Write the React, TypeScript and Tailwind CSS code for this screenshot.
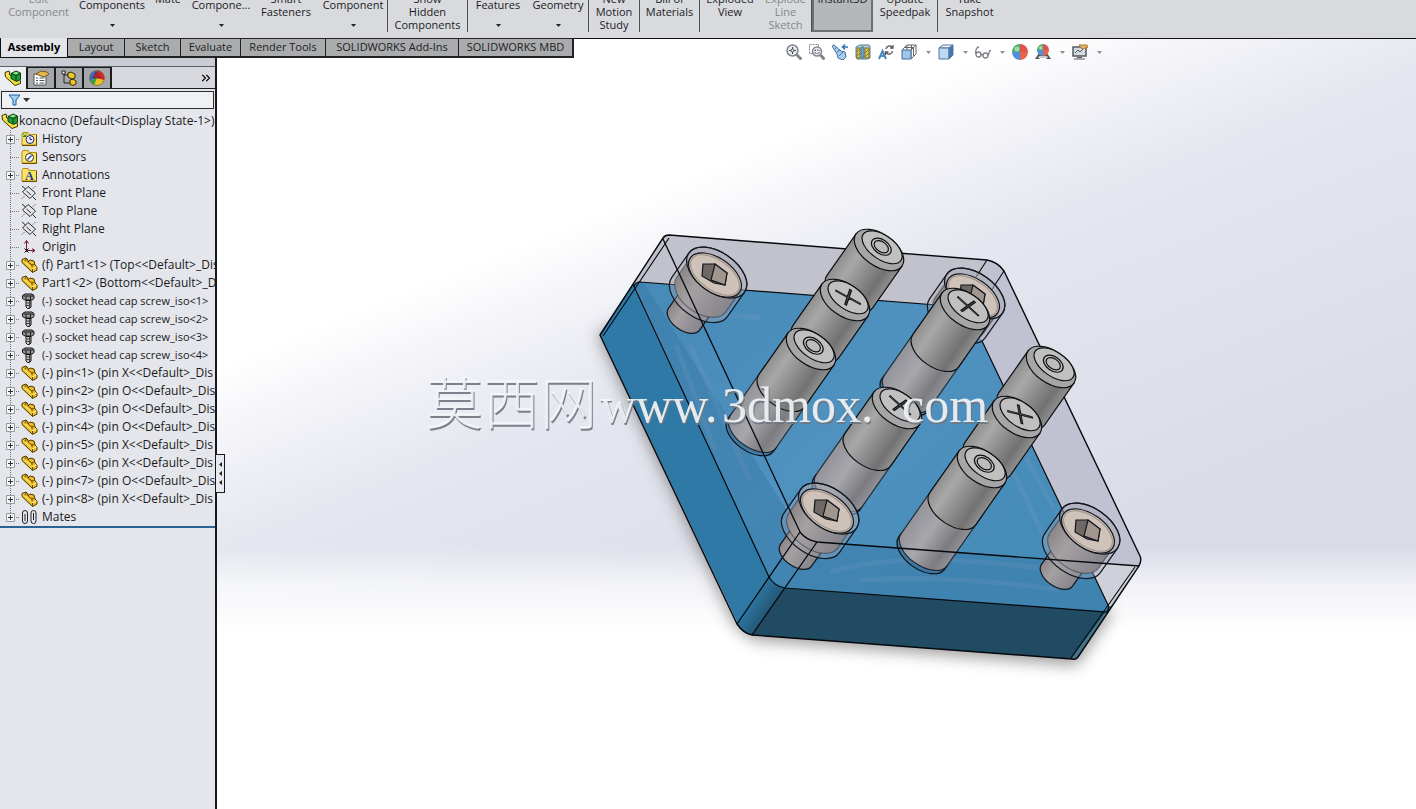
import React from "react";
import { ChevronsRight } from "lucide-react";

type CommandProps = {
  lines: string[];
  width: string;
  menu?: boolean;
  disabled?: boolean;
  pressed?: boolean;
};

const commandGroups: CommandProps[][] = [
  [
    { lines: ["Edit", "Component"], width: "w-[77px]", disabled: true },
    { lines: ["Components"], width: "w-[70px]", menu: true },
    { lines: ["Mate"], width: "w-[42px]" },
    { lines: ["Compone..."], width: "w-[64px]", menu: true },
    { lines: ["Smart", "Fasteners"], width: "w-[66px]" },
    { lines: ["Component"], width: "w-[68px]", menu: true },
  ],
  [{ lines: ["Show", "Hidden", "Components"], width: "w-[79px]" }],
  [
    { lines: ["Features"], width: "w-[60px]", menu: true },
    { lines: ["Geometry"], width: "w-[60px]", menu: true },
  ],
  [{ lines: ["New", "Motion", "Study"], width: "w-[50px]" }],
  [{ lines: ["Bill of", "Materials"], width: "w-[59px]" }],
  [
    { lines: ["Exploded", "View"], width: "w-[60px]" },
    { lines: ["Explode", "Line", "Sketch"], width: "w-[51px]", disabled: true },
  ],
  [
    { lines: ["Instant3D"], width: "w-[61px]", pressed: true },
    { lines: ["Update", "Speedpak"], width: "w-[64px]" },
  ],
  [{ lines: ["Take", "Snapshot"], width: "w-[63px]" }],
];

const documentTabs = [
  { label: "Assembly", width: "w-[68px]" },
  { label: "Layout", width: "w-[57px]" },
  { label: "Sketch", width: "w-[56px]" },
  { label: "Evaluate", width: "w-[60px]" },
  { label: "Render Tools", width: "w-[85px]" },
  { label: "SOLIDWORKS Add-Ins", width: "w-[133px]" },
  { label: "SOLIDWORKS MBD", width: "w-[115px]" },
];

type TreeItem = { icon: keyof typeof treeIcons; label: string; expandable?: boolean };

function Assembly() {
  return (
    <svg className="shrink-0" width="18" height="16" viewBox="0 0 18 16">
      <path d="M1 2.500L5 1l1 2-1 1 6 6 2-1 3.500 1.500v3L11 15.500 1.500 7z" fill="#f2dc3c" stroke="#3c3000" />
      <path d="M2 3l9.500 8.500L16 10" fill="none" stroke="#fff7a8" />
      <path d="M7 3.500L12 1l4.500 2v6.500l-4 2L7 8.500z" fill="#1f9a34" stroke="#0c3f14" />
      <path d="M7 3.500l5 2v5.500M12 5.500l4.500-2" fill="none" stroke="#0c3f14" />
      <path d="M8.500 3.300L12 1.700l3 1.400-3 1.400z" fill="#8ee58a" />
    </svg>
  );
}

function Folder({ children }: { children: React.ReactNode }) {
  return (
    <svg width="16" height="16" viewBox="0 0 16 16">
      <path d="M1 3.500V14h14.500V3.500H8L7 1.500H2z" fill="#fbe564" stroke="#b98a10" />
      <path d="M15.500 4v10.500H1" fill="none" stroke="#6e4a00" />
      {children}
    </svg>
  );
}

function Plane() {
  return (
    <svg width="16" height="16" viewBox="0 0 16 16" fill="none" stroke="#2b2b2b">
      <path d="M7 1.500L14.500 8 9 13.500 1.500 7z" />
      <path d="M1 1l4 3.500M11.500 11.500L15 15M5.500 6l4.500 4" />
      <path d="M1 13.500L3.500 11M12 3.500L14.500 1" strokeDasharray="1 1" />
    </svg>
  );
}

function Part() {
  return (
    <svg width="17" height="16" viewBox="0 0 17 16">
      <path d="M1 2.500L5 1l2 2v2l2-2 4 1 1 4 2 2v3l-4.500 2.500L1 5.500z" fill="#efbe20" stroke="#4d3600" />
      <path d="M2 3.500l9.500 8L15.500 10" fill="none" stroke="#fff2a0" />
      <path d="M7.500 5.500L11 8l2.500-1M11 8v2.500M11.500 12v3M5 1.500v2L3.500 4" fill="none" stroke="#6b4900" />
    </svg>
  );
}

function Bolt() {
  return (
    <svg width="16" height="16" viewBox="0 0 16 16">
      <path d="M1.500 2.500L4 1h7l2 1.500v3L11 7H4L1.500 5.500z" fill="#9b9b9b" stroke="#111" />
      <path d="M5 3.500v3M9.500 3.500v3M2.500 3h10" stroke="#111" />
      <path d="M5 7.500h5V14l-1.500 1.500h-2L5 14z" fill="#c9c9c9" stroke="#111" />
      <path d="M8.500 8v7M5 10h5M5 12.500h5" stroke="#444" />
    </svg>
  );
}

const treeIcons = {
  history: (
    <Folder>
      <circle cx="9" cy="8.500" r="4" fill="#e9ecff" stroke="#23237a" />
      <path d="M9 6v2.500h2" fill="none" stroke="#23237a" />
      <path d="M1.500 2.500l3 3M5 2.500v3H2" fill="none" stroke="#188a18" />
    </Folder>
  ),
  sensors: (
    <Folder>
      <circle cx="8.500" cy="8.500" r="4" fill="#fff" stroke="#333" />
      <path d="M6.500 10.500l4-4" stroke="#1d3f9c" strokeWidth="1.500" />
    </Folder>
  ),
  annotations: (
    <Folder>
      <text x="4" y="13" className="fill-[#173a9a] font-['Liberation_Serif',serif] text-[12px] font-bold">
        A
      </text>
    </Folder>
  ),
  plane: <Plane />,
  origin: (
    <svg width="16" height="16" viewBox="0 0 16 16" fill="none" stroke="#7d1230">
      <path d="M5.500 13V2M3.500 4.500l2-3 2 3M5 11.500h9M11 9.500l3 2-3 2" />
      <path d="M3.500 9.500l4 4M7.500 9.500l-4 4" stroke="#111" />
    </svg>
  ),
  part: <Part />,
  bolt: <Bolt />,
  mates: (
    <svg width="17" height="16" viewBox="0 0 17 16" fill="none" stroke="#222">
      <path d="M1.500 12V4a2.500 2.500 0 015 0v8a2.500 2.500 0 01-5 0M4 5v7" />
      <path d="M10 12V4a2.500 2.500 0 015 0v8a2.500 2.500 0 01-5 0M12.500 4v7" />
    </svg>
  ),
};

const treeItems: TreeItem[] = [
  { icon: "history", label: "History", expandable: true },
  { icon: "sensors", label: "Sensors" },
  { icon: "annotations", label: "Annotations", expandable: true },
  { icon: "plane", label: "Front Plane" },
  { icon: "plane", label: "Top Plane" },
  { icon: "plane", label: "Right Plane" },
  { icon: "origin", label: "Origin" },
  { icon: "part", label: "(f) Part1<1> (Top<<Default>_Dis", expandable: true },
  { icon: "part", label: "Part1<2> (Bottom<<Default>_Di", expandable: true },
  { icon: "bolt", label: "(-) socket head cap screw_iso<1>", expandable: true },
  { icon: "bolt", label: "(-) socket head cap screw_iso<2>", expandable: true },
  { icon: "bolt", label: "(-) socket head cap screw_iso<3>", expandable: true },
  { icon: "bolt", label: "(-) socket head cap screw_iso<4>", expandable: true },
  { icon: "part", label: "(-) pin<1> (pin X<<Default>_Dis", expandable: true },
  { icon: "part", label: "(-) pin<2> (pin O<<Default>_Dis", expandable: true },
  { icon: "part", label: "(-) pin<3> (pin O<<Default>_Dis", expandable: true },
  { icon: "part", label: "(-) pin<4> (pin O<<Default>_Dis", expandable: true },
  { icon: "part", label: "(-) pin<5> (pin X<<Default>_Dis", expandable: true },
  { icon: "part", label: "(-) pin<6> (pin X<<Default>_Dis", expandable: true },
  { icon: "part", label: "(-) pin<7> (pin O<<Default>_Dis", expandable: true },
  { icon: "part", label: "(-) pin<8> (pin X<<Default>_Dis", expandable: true },
  { icon: "mates", label: "Mates", expandable: true },
];

function Command({ lines, width, menu, disabled, pressed }: CommandProps) {
  return (
    <button
      type="button"
      disabled={disabled}
      className={`${width} flex h-full shrink-0 flex-col items-center ${
        pressed ? "border-2 border-t-0 border-[#6d7073] bg-[#b4b8bb]" : ""
      } ${disabled ? "text-[#85888c]" : "text-[#1c1c1e]"}`}
    >
      {/* labels hang off the clipped upper edge of the ribbon */}
      <span className={`flex flex-col whitespace-nowrap ${menu ? "-mt-0.5" : "-mt-2"}`}>
        {lines.map((line) => (
          <span key={line}>{line}</span>
        ))}
      </span>
      {menu && (
        <svg className="mt-[13px]" width="5" height="3" viewBox="0 0 5 3">
          <path d="M0 0h5L2.500 3z" fill="#222" />
        </svg>
      )}
    </button>
  );
}

function Ribbon() {
  return (
    <header className="flex h-[38px] shrink-0 overflow-hidden bg-[#d8dade] text-[11px] leading-[13px]">
      {commandGroups.map((group, i) => (
        <div key={i} className="flex h-8 shrink-0 border-r border-[#4e5054] last:border-r-0">
          {group.map((cmd) => (
            <Command key={cmd.lines.join(" ")} {...cmd} />
          ))}
        </div>
      ))}
    </header>
  );
}

function HudCaret() {
  return (
    <svg width="5" height="3" viewBox="0 0 5 3">
      <path d="M0 0h5L2.500 3z" fill="#8e8e92" />
    </svg>
  );
}

function Wheel() {
  return (
    <>
      <path d="M8 8V0a8 8 0 018 8z" fill="#e0524f" />
      <path d="M8 8h8a8 8 0 01-8 8z" fill="#e4644e" />
      <path d="M8 8v8a8 8 0 01-8-8z" fill="#4f8fdc" />
      <path d="M8 8H0a8 8 0 018-8z" fill="#45b265" />
      <circle cx="5" cy="5" r="2.500" fill="#fff" opacity=".5" />
    </>
  );
}

const hudIcons: { label: string; art: React.ReactNode; menu?: boolean }[] = [
  {
    label: "Zoom to Fit",
    art: (
      <g fill="none" stroke="#80848c">
        <circle cx="6.500" cy="6.500" r="5.500" fill="#e8ecf2" strokeWidth="1.500" />
        <path d="M10.500 10.500l5 5" strokeWidth="3" />
        <path d="M6.500 3v2M6.500 8v2M3 6.500h2M8 6.500h2" stroke="#444" />
        <circle cx="6.500" cy="6.500" r="1.500" stroke="#444" />
      </g>
    ),
  },
  {
    label: "Zoom to Area",
    art: (
      <g fill="none" stroke="#80848c">
        <path d="M.5 .5h9v9h-9z" strokeDasharray="2 1" />
        <circle cx="8" cy="7.500" r="4.500" fill="#e8ecf2" strokeWidth="1.500" />
        <path d="M11.500 11l4 4.500" strokeWidth="3" />
        <path d="M6 6h4v3.500H6z" strokeDasharray="1 1" stroke="#444" />
      </g>
    ),
  },
  {
    label: "Previous View",
    art: (
      <g fill="none" stroke="#3f729e">
        <path d="M0 2l2-1 7 6 4 1 1 5-3 3-5-2-1-4z" fill="#a7cdf0" />
        <path d="M3 5l2-2M5 8l3-2M7 12l4-4" />
        <path d="M16 3h-5.500m2.500-2.500L10.500 3 13 5.500" stroke="#2f76b8" strokeWidth="1.500" />
      </g>
    ),
  },
  {
    label: "Section View",
    art: (
      <g stroke="#4d7890">
        <path d="M1 3l4-2h9l1 2v11l-3 1H2l-1-2z" fill="#b9d4dd" />
        <path d="M2 4h3v10H2zM10 4h4v10h-4z" fill="#e9ca3d" stroke="#85712a" />
        <path d="M6 3h3v11H6z" fill="#68a7cd" />
        <path d="M2 8l3-3M2 12l3-3M10 9l4-4M10 13l4-4" stroke="#857535" />
      </g>
    ),
  },
  {
    label: "Dynamic Annotation Views",
    art: (
      <g fill="none" stroke="#555">
        <path d="M1 15l3.500-8L8 15M2.500 12h4" stroke="#4a86bd" strokeWidth="2" />
        <path d="M8 5a3.500 3.500 0 016-2M15 1v3h-3M14.500 7a3.500 3.500 0 01-6 2M7.500 11V8h3" strokeWidth="1.300" />
      </g>
    ),
  },
  {
    label: "View Orientation",
    menu: true,
    art: (
      <g fill="none" stroke="#62666d">
        <path d="M1 6l5-5h9v9l-5 5M10 15V6l5-5M6 1v5M10.500 1v5M12.500 4v8M3.500 3.500h9" />
        <path d="M1 6h9v9H1z" fill="#9fc7ec" stroke="#3e6b97" />
      </g>
    ),
  },
  {
    label: "Display Style",
    menu: true,
    art: (
      <g stroke="#52779d">
        <path d="M1 4l4-3h10l-4 3z" fill="#eef5fb" />
        <path d="M1 4h10v11H1z" fill="#bddaf2" />
        <path d="M11 4l4-3v10l-4 4z" fill="#4179b4" />
      </g>
    ),
  },
  {
    label: "Hide/Show Items",
    menu: true,
    art: (
      <g fill="none" stroke="#7c8087" strokeWidth="1.300">
        <circle cx="3.500" cy="10.500" r="2.500" />
        <circle cx="10.500" cy="11.500" r="2.500" />
        <path d="M1 10C0 6 2 3 4 3M6 10.500l2 .5M13 11.500c2-3 0-5 3-5" />
      </g>
    ),
  },
  { label: "Edit Appearance", art: <Wheel /> },
  {
    label: "Apply Scene",
    menu: true,
    art: (
      <g>
        <path d="M0 15l4-6h8l4 6h-4l-2-2H6l-2 2z" fill="#555" />
        <path d="M4 12h8l1 2H3z" fill="#c9ccd0" />
        <g transform="translate(2 0) scale(.75)">
          <Wheel />
        </g>
      </g>
    ),
  },
  {
    label: "View Settings",
    menu: true,
    art: (
      <g fill="none" stroke="#55585e">
        <path d="M1 3h13v9H1z" fill="#d5dae0" strokeWidth="1.500" />
        <path d="M3 9l3-3 2 2 4-4M5 13.500h5M2 15h11" />
        <path d="M7 1h8l1 2-6 2z" fill="#e4b567" stroke="#ad7c37" />
      </g>
    ),
  },
];

function HudToolbar() {
  return (
    <div role="toolbar" aria-label="View" className="mr-[314px] mt-[5px] ml-auto flex h-4 shrink-0 items-center gap-[7px]">
      {hudIcons.map(({ label, art, menu }) => (
        <button key={label} type="button" aria-label={label} className="flex items-center gap-[9px]">
          <svg width="16" height="16" viewBox="0 0 16 16">
            {art}
          </svg>
          {menu && <HudCaret />}
        </button>
      ))}
    </div>
  );
}

const panelTabs = [
  { label: "FeatureManager", art: <Assembly /> },
  {
    label: "PropertyManager",
    art: (
      <svg width="18" height="16" viewBox="0 0 18 16">
        <path d="M2 4h12v11H2z" fill="#fff" stroke="#555" />
        <path d="M4 8h2M7.500 8h5M4 10.500h2M7.500 10.500h5M4 13h2M7.500 13h5" stroke="#456" />
        <path d="M4 4l5-3 6 1 2 2-5 3-3-1z" fill="#e3b64e" stroke="#7b5716" />
      </svg>
    ),
  },
  {
    label: "ConfigurationManager",
    art: (
      <svg width="18" height="16" viewBox="0 0 18 16">
        <path d="M4 1v12h6M4 5h5" fill="none" stroke="#222" />
        <path d="M2 1h3v3H2z" fill="#fff" stroke="#222" />
        <path d="M8 3l3-1 4 2v4l-3 1-4-2zM10 10l3-1 3 2v3l-3 1.500-3-1.500z" fill="#edc72f" stroke="#372a00" />
      </svg>
    ),
  },
  {
    label: "DisplayManager",
    art: (
      <svg width="16" height="16" viewBox="0 0 16 16">
        <circle cx="8" cy="8" r="7.500" fill="#efbf24" />
        <path d="M8 8L1 10.500A7.500 7.500 0 018 .5z" fill="#356bd0" />
        <path d="M8 8V.5a7.500 7.500 0 017 9.500z" fill="#d3232b" />
        <path d="M8 8l-7 2.500a7.500 7.500 0 004 4.500z" fill="#35a243" />
        <path d="M7 2l4 6H4z" fill="#c01f28" stroke="#333" strokeWidth=".6" />
        <circle cx="8" cy="8" r="7.500" fill="none" stroke="#664" strokeWidth=".7" />
      </svg>
    ),
  },
];

function TreeRow({ icon, label, expandable, last }: TreeItem & { last: boolean }) {
  return (
    <li className="flex h-[18px] items-center whitespace-nowrap">
      <button type="button" aria-label={`Expand ${label}`} disabled={!expandable} className="h-[18px] w-[21px] shrink-0">
        <svg width="21" height="18" viewBox="0 0 21 18">
          <path d={last ? "M10.500 0v9" : "M10.500 0v18"} stroke="#777" strokeDasharray="1 1" />
          <path d="M10 9.500h10" stroke="#777" strokeDasharray="1 1" />
          {expandable && (
            <>
              <path d="M6.500 5.500h8v8h-8z" fill="#f4f5f7" stroke="#979a9f" />
              <path d="M8 9.500h5M10.500 7v5" stroke="#333" />
            </>
          )}
        </svg>
      </button>
      <span className="w-[17px] shrink-0">{treeIcons[icon]}</span>
      <span className={icon === "bolt" ? "ml-1 text-[11px]" : "ml-1"}>{label}</span>
    </li>
  );
}

function FeaturePanel() {
  return (
    <aside className="relative w-[217px] shrink-0 border-r-2 border-[#16181d] bg-[#e4e6eb]">
      <div className="h-[9px] border-b border-[#5b5d66] bg-[#c9ccd3]" />
      <div role="tablist" className="flex h-[22px] items-stretch bg-[#d7d9de]">
        {panelTabs.map((tab, i) => (
          <button
            key={tab.label}
            type="button"
            role="tab"
            aria-selected={i === 0}
            aria-label={tab.label}
            className={`flex w-7 items-center justify-center border-r-2 border-[#1b1c20] ${
              i === 0 ? "bg-[#eceef1]" : "border-b border-t bg-[#a5a7ab]"
            }`}
          >
            {tab.art}
          </button>
        ))}
        <button type="button" aria-label="More" className="flex flex-1 items-center justify-end border-b border-[#1b1c20] pr-0.5">
          <ChevronsRight size={14} strokeWidth={2} />
        </button>
      </div>
      <div className="mx-px mt-0.5 flex h-[18px] items-center border border-[#2a2b2f] bg-[#f0f1f3] pl-1.5">
        <svg width="24" height="12" viewBox="0 0 24 12">
          <path d="M1 1h11L8 6v5H5V6z" fill="#a4cff5" stroke="#1c5fa6" />
          <path d="M15 4h7l-3.500 4z" fill="#333" />
        </svg>
        <input aria-label="Filter" className="min-w-0 flex-1 bg-transparent outline-none" />
      </div>
      <div className="mt-[3px] overflow-hidden border-b-2 border-[#2c6193] text-[12px] leading-[18px] text-[#1a1a1c]">
        <div className="flex h-[18px] items-center whitespace-pre pl-px">
          <Assembly />
          <span>konacno (Default&lt;Display State-1&gt;)</span>
        </div>
        <ul>
          {treeItems.map((item, i) => (
            <TreeRow key={item.label} {...item} last={i === treeItems.length - 1} />
          ))}
        </ul>
      </div>
      <button
        type="button"
        aria-label="Collapse panel"
        className="absolute top-[396px] -right-[10px] z-10 flex h-[39px] w-[9px] flex-col items-center justify-center gap-1 border border-l-0 border-[#16181d] bg-[#e8eaee]"
      >
        {[0, 1, 2].map((n) => (
          <svg key={n} width="3" height="5" viewBox="0 0 3 5">
            <path d="M3 0v5L0 2.500z" fill="#222" />
          </svg>
        ))}
      </button>
    </aside>
  );
}

const AXIS_ANGLE = 35;

function Pin({ x, y, mark, turn = 0, seated = false }: { x: number; y: number; mark: "x" | "o"; turn?: number; seated?: boolean }) {
  return (
    <g transform={`translate(${x} ${y}) rotate(${AXIS_ANGLE})`} stroke="#0c0e12" strokeWidth="1.200">
      {seated && (
        <>
          <path d="M-28 100v5a28 16 0 0056 0v-5" fill="#3d759d" fillOpacity=".7" />
          <path d="M-28 40v61a28 16 0 0056 0V40z" fill="url(#pinSunk)" strokeOpacity=".75" />
        </>
      )}
      <path d="M-28 0v51a28 16 0 0056 0V0z" fill="url(#pinBody)" />
      <ellipse rx="28" ry="16" fill="#a6a6a6" />
      <ellipse cx="1" cy="-4" rx="23" ry="12" fill="#bfc0bf" />
      {mark === "o" ? (
        <g transform="translate(0 -4)" fill="none">
          <ellipse rx="11" ry="7" />
          <ellipse rx="8" ry="5" fill="#bcbdbc" />
        </g>
      ) : (
        <g transform={`translate(1 -4) scale(1 .6) rotate(${turn})`}>
          <path d="M-14-1L-1-1V-13h2v12L14-1v2H1V13H-1V1L-14 1z" fill="#55585a" />
        </g>
      )}
    </g>
  );
}

function CapScrew({ x, y }: { x: number; y: number }) {
  return (
    <g transform={`translate(${x} ${y})`} stroke="#12161d" strokeWidth="1.200">
      <g transform={`rotate(${AXIS_ANGLE})`}>
        <path d="M-19 28v26a19 11 0 0038 0V28z" fill="url(#screwBody)" />
        <path d="M-34-3v30a34 20 0 0068 0V-3a34 20 0 00-68 0z" fill="#a6a9b8" fillOpacity=".35" />
        <path d="M-30 0v24a30 18 0 0060 0V0z" fill="url(#screwBody)" strokeOpacity=".4" />
        <ellipse cy="-3" rx="34" ry="20" fill="#a9abb4" fillOpacity=".35" />
        <ellipse rx="30" ry="17" fill="#cfc2b8" />
        <ellipse rx="28" ry="15" fill="none" strokeOpacity=".25" />
      </g>
      <path d="M-12-11L0-11 12-2 10 10-1 8-13 1z" fill="#6f6864" />
      <path d="M0-11L12-2 10 10-4 5z" fill="#a0968e" />
    </g>
  );
}

function Model() {
  return (
    <svg className="absolute inset-0 h-full w-full" viewBox="217 58 1199 751" preserveAspectRatio="xMinYMin meet" aria-label="konacno assembly">
      <defs>
        <linearGradient id="pinBody">
          <stop offset="0" stopColor="#8f8f8f" />
          <stop offset=".25" stopColor="#a8a8a8" />
          <stop offset=".8" stopColor="#727272" />
          <stop offset="1" stopColor="#909090" />
        </linearGradient>
        <linearGradient id="pinSunk">
          <stop offset="0" stopColor="#93939a" />
          <stop offset=".4" stopColor="#a7a7ac" />
          <stop offset=".8" stopColor="#7b7b80" />
          <stop offset="1" stopColor="#909298" />
        </linearGradient>
        <linearGradient id="screwBody">
          <stop offset="0" stopColor="#8b8688" />
          <stop offset=".35" stopColor="#a5a0a2" />
          <stop offset="1" stopColor="#86848b" />
        </linearGradient>
        <linearGradient id="corner" gradientUnits="userSpaceOnUse" x1="752" y1="598" x2="770" y2="610">
          <stop offset="0" stopColor="#2e78a5" />
          <stop offset="1" stopColor="#245674" />
        </linearGradient>
        <linearGradient id="plate" gradientUnits="userSpaceOnUse" x1="680" y1="300" x2="960" y2="600">
          <stop offset="0" stopColor="#478bb8" />
          <stop offset=".5" stopColor="#5092bf" />
          <stop offset="1" stopColor="#468cb9" />
        </linearGradient>
        <filter id="soft" x="-10%" y="-10%" width="120%" height="120%">
          <feGaussianBlur stdDeviation="8" />
        </filter>
      </defs>

      <path d="M597 334L736 627 754 640 1077 665 1112 612 900 500 660 300z" fill="#4c4744" opacity=".55" filter="url(#soft)" />

      {/* clear upper block */}
      <path d="M600 334L663 238 668 235 987 260Q998 262 1004 271L1140 556 1141 562 1110 610z" fill="#c2c2cc" />
      <path d="M987 260Q998 262 1004 271L1140 556 1138 566 1109 607 966 307z" fill="#c0c2d2" />
      <path d="M1087 562L1139 566 1109 607z" fill="#cfd1da" />

      {/* blue lower block */}
      <path d="M600 334L633 284 770 578 738 624z" fill="#2e79a6" />
      <path d="M634 284Q636 282 640 282L962 307 982 341 1109 607 1108 612 785 588Q774 586 769 577z" fill="url(#plate)" />
      <path d="M634 284L644 283 800 532 817 542 1087 562 1109 607 1108 612 785 588Q774 586 769 577z" fill="#3c7eac" fillOpacity=".65" />
      <path d="M785 588L1108 612 1073 659 752 635z" fill="#214b63" />
      <path d="M770 578Q774 586 785 588L752 635Q742 634 737 624z" fill="url(#corner)" />
      <path d="M1109 607L1113 605 1078 658 1071 659z" fill="#45758a" />
      <g stroke="#9aa9c0" strokeOpacity=".13" strokeWidth="5" fill="none">
        <path d="M676 345L715 450M690 345L750 480M760 318L690 312M860 580Q960 575 1060 590M830 572Q900 550 1040 568M1010 465L1055 560M1022 450L1066 530" />
      </g>

      <g fill="none" stroke="#05080c" strokeWidth="1.400">
        <path d="M600 335L663 238Q665 235 669 235L987 260Q998 262 1004 271L1140 556Q1142 560 1139 566L1078 657Q1076 660 1072 659L752 635Q743 633 737 624z" />
        <path d="M634 287Q635 282 640 282L962 307M982 341L1109 607 1107 612 785 588Q774 586 769 577L633 284" strokeWidth="1.200" />
        <path d="M987 260L976 277M1004 271L987 297M603 336L669 238M1135 567L1071 658" strokeWidth="1.100" />
      </g>

      <CapScrew x={715} y={275} />
      <CapScrew x={973} y={296} />
      <Pin x={879} y={250} mark="o" />
      <Pin x={845} y={300} mark="x" turn={-10} />
      <Pin x={811} y={349} mark="o" seated />
      <Pin x={965} y={309} mark="x" turn={12} seated />
      <Pin x={897} y={408} mark="x" turn={12} seated />
      <Pin x={1051} y={367} mark="o" />
      <Pin x={1017} y={417} mark="x" turn={-32} />
      <Pin x={982} y={467} mark="o" seated />
      <CapScrew x={827} y={511} />
      <CapScrew x={1088} y={531} />

      <g fill="none" stroke="#05080c" strokeWidth="1.300">
        <path d="M663 239L800 532Q806 540 817 542L1139 566" />
        <path d="M737 624L800 532M752 635L817 542" />
      </g>

      <g className="fill-[#f4f7fa] font-['Liberation_Serif','Noto_Sans_CJK_SC',serif] text-[50px] drop-shadow-[1px_2px_0_#6f7680]" fillOpacity=".9">
        <text x="426" y="424" className="font-['Noto_Sans_CJK_SC',sans-serif] text-[57px] font-light">
          莫西网
        </text>
        <text x="600" y="422">www.</text>
        <text x="722" y="422">3dmox.</text>
        <text x="902" y="422">com</text>
      </g>
    </svg>
  );
}

export default function App() {
  return (
    <div className="flex h-screen flex-col overflow-hidden font-['Open_Sans','Noto_Sans',sans-serif]">
      <Ribbon />
      <div className="flex min-h-0 flex-1 flex-col border-t border-[#111] bg-[linear-gradient(to_bottom,transparent_66%,rgba(255,255,255,0.65)_71%,white_77%),linear-gradient(158deg,white_31%,#f5f5f9_36%,#e4e7ef_45%,#d9dbe7_72%)]">
        <div className="flex h-[19px] shrink-0 items-start">
          <div role="tablist" className="-mt-px flex h-5 shrink-0 text-[11px] leading-[15px]">
            {documentTabs.map((tab, i) => (
              <button
                key={tab.label}
                type="button"
                role="tab"
                aria-selected={i === 0}
                className={`${tab.width} whitespace-nowrap pb-0.5 ${
                  i === 0
                    ? "border-r border-b border-l border-[#111] bg-[#e3e5e9] font-bold"
                    : "border-t border-r border-b-2 border-[#222] bg-[#a9abad] text-[#1d1d1f] last:border-r-2"
                }`}
              >
                {tab.label}
              </button>
            ))}
          </div>
          <HudToolbar />
        </div>
        <div className="flex min-h-0 flex-1">
          <FeaturePanel />
          <main className="relative min-w-0 flex-1">
            <Model />
          </main>
        </div>
      </div>
    </div>
  );
}
